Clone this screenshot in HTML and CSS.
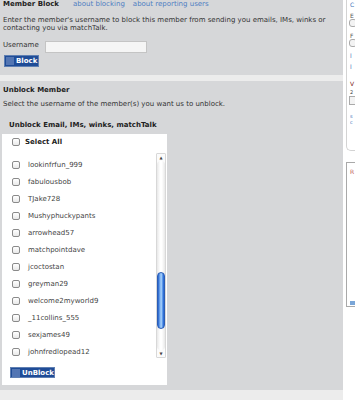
FILE: index.html
```html
<!DOCTYPE html>
<html>
<head>
<meta charset="utf-8">
<link rel="stylesheet" href="styles.css">
</head>
<body>
<div class="page">
  <div class="main">
    <section class="panel block-panel">
      <div class="head-row">
        <span class="title">Member Block</span>
        <a class="link link-a">about blocking</a>
        <a class="link">about reporting users</a>
      </div>
      <p class="desc">Enter the member's username to block this member from sending you emails, IMs, winks or contacting you via matchTalk.</p>
      <div class="user-row">
        <label class="user-label">Username</label>
        <span class="input"></span>
      </div>
      <button class="btn btn-block"><span class="dots"></span>Block</button>
    </section>
    <div class="strip"></div>
    <section class="panel unblock-panel">
      <div class="title">Unblock Member</div>
      <p class="desc2">Select the username of the member(s) you want us to unblock.</p>
      <div class="subtitle">Unblock Email, IMs, winks, matchTalk</div>
      <div class="card">
        <div class="select-all"><span class="cb"></span><span>Select All</span></div>
        <div class="listbox">
          <ul class="items">
            <li><span class="cb"></span>lookinfrfun_999</li>
            <li><span class="cb"></span>fabulousbob</li>
            <li><span class="cb"></span>TJake728</li>
            <li><span class="cb"></span>Mushyphuckypants</li>
            <li><span class="cb"></span>arrowhead57</li>
            <li><span class="cb"></span>matchpointdave</li>
            <li><span class="cb"></span>jcoctostan</li>
            <li><span class="cb"></span>greyman29</li>
            <li><span class="cb"></span>welcome2myworld9</li>
            <li><span class="cb"></span>_11collins_555</li>
            <li><span class="cb"></span>sexjames49</li>
            <li><span class="cb"></span>johnfredlopead12</li>
          </ul>
          <div class="scrollbar">
            <span class="arrow up">▲</span>
            <div class="track"><div class="thumb"></div></div>
            <span class="arrow down">▼</span>
          </div>
        </div>
        <button class="btn btn-unblock"><span class="dots"></span>UnBlock</button>
      </div>
    </section>
    <div class="strip strip-bottom"></div>
  </div>
  <aside class="side">
    <div class="sbox sbox1">
      <span class="s-c">C</span>
      <span class="s-t">E</span>
      <span class="s-in"></span>
      <span class="s-t">F</span>
      <span class="s-in"></span>
      <span class="s-l">l</span>
      <span class="s-l s-l2">l</span>
      <span class="s-v">V</span>
      <span class="s-2">2</span>
      <span class="s-in s-in3"></span>
      <span class="s-l s-l3">s</span>
      <span class="s-l s-l3">c</span>
    </div>
    <div class="sbox sbox2">
      <span class="s-r">R</span>
      <span class="s-dot"></span>
    </div>
  </aside>
</div>
</body>
</html>
```
FILE: styles.css
```css
* { box-sizing: border-box; }
html, body { margin: 0; padding: 0; background: #fff; }
body {
  font-family: "DejaVu Sans", Verdana, sans-serif;
  font-size: 7px;
  color: #333;
  width: 355px;
  height: 400px;
  overflow: hidden;
}
.page { display: flex; width: 355px; height: 400px; }
.main { width: 343px; flex: none; background: #d6d7d9; display: flex; flex-direction: column; }
.panel { background: #d6d7d9; padding: 0 3px; }
.block-panel { height: 75px; }
.head-row { display: flex; height: 8px; line-height: 8px; align-items: center; }
.title { font-weight: bold; color: #222; line-height: 8px; }
.link { color: #4f7ec2; text-decoration: none; }
.head-row .title { margin-right: 14px; }
.link-a { margin-right: 8px; }
.desc { margin: 8px 0 0; line-height: 8px; width: 330px; }
.user-row { display: flex; margin-top: 9px; align-items: flex-start; }
.user-label { width: 42px; line-height: 8px; padding-top: 0; }
.input { display: block; width: 102px; height: 12px; background: #f5f5f5; border: 1px solid #c4c4c4; }
.btn {
  display: flex; align-items: center; border: none; padding: 0;
  background: #1f4c97; color: #fff; font-family: "DejaVu Sans", Verdana, sans-serif;
  font-weight: bold; font-size: 7px; line-height: 8px; border: 1px solid #5f7fb2;
}
.dots {
  display: block; width: 8px; height: 8px; margin: 0 2px 0 1px;
  background-image: radial-gradient(circle, #5779b5 0.7px, transparent 0.8px);
  background-size: 2px 2px;
}
.btn-block { width: 35px; height: 12px; margin: 2px 0 0 1px; }
.strip { height: 6px; background: #ececec; flex: none; }
.strip-bottom { height: 10px; }
.unblock-panel { flex: 1; padding-top: 5px; }
.desc2 { margin: 6px 0 0; line-height: 8px; }
.subtitle { font-weight: bold; color: #222; margin: 13px 0 0 6px; line-height: 8px; }
.card { background: #fff; width: 165px; margin: 5px 0 0 -1px; padding: 4px 0 7px; }
.select-all { display: flex; align-items: center; font-weight: bold; color: #222; height: 8px; margin-left: 10px; }
.select-all .cb { margin-right: 5px; }
.cb {
  display: inline-block; width: 8px; height: 8px; border: 1px solid #8a8a8a; border-radius: 2px;
  background: linear-gradient(#fff, #e9e9e9); flex: none;
}
.listbox { display: flex; height: 205px; margin-top: 7px; overflow: hidden; }
.items { list-style: none; margin: 0; padding: 3px 0 0 10px; flex: 1; }
.items li { display: flex; align-items: center; height: 17px; color: #444; }
.items .cb { margin-right: 8px; }
.scrollbar { width: 10px; margin-right: 1px; display: flex; flex-direction: column; border: 1px solid #d8d8d8; border-radius: 1px; background: #fbfbfb; }
.arrow { font-size: 4px; line-height: 7px; height: 7px; text-align: center; color: #444; flex: none; }
.track { flex: 1; position: relative; background: linear-gradient(90deg, #e8e8e8, #fff 40%, #fff 60%, #e8e8e8); border-radius: 4px; }
.thumb {
  position: absolute; left: 0; right: 0; top: 111px; height: 57px; border-radius: 4px;
  background: linear-gradient(90deg, #1f5dcb, #7fb4f2 35%, #a9d2fb 55%, #4b8be6 80%, #1f5dcb);
  border: 1px solid #2b5db5;
}
.btn-unblock { width: 45px; height: 11px; margin: 9px 0 0 8px; }
.side { width: 12px; flex: none; background: #fff; padding-left: 3px; display: flex; flex-direction: column; overflow: hidden; }
.sbox { border: 1px solid #d3d3d3; border-right: none; width: 20px; display: flex; flex-direction: column; padding-left: 3px; font-size: 6px; line-height: 7px; }
.sbox1 { height: 151px; border-top: none; border-radius: 0 0 0 5px; padding-top: 1px; }
.sbox2 { margin-top: 11px; height: 145px; border-color: #a9a9a9; padding-top: 5px; }
.s-c { color: #3b6fb7; height: 11px; }
.s-t { color: #555; height: 6px; }
.s-in { display: block; width: 8px; height: 8px; border: 1px solid #aaa; border-radius: 3px; margin: 1px 0 5px -1px; background: #f3f3f3; }
.s-l { color: #3b6fb7; height: 11px; }
.s-l2 { height: 17px; }
.s-v { color: #7a2020; height: 9px; }
.s-2 { color: #444; height: 6px; font-size: 5px; }
.s-in3 { border-radius: 0; margin-bottom: 8px; height: 9px; }
.s-l3 { height: 6px; font-size: 5px; line-height: 6px; overflow: hidden; }
.s-r { color: #c26060; height: 133px; }
.s-dot { display: block; width: 5px; height: 4px; background-image: radial-gradient(circle, #7aa6d8 0.8px, transparent 0.9px); background-size: 2px 2px; }
```
